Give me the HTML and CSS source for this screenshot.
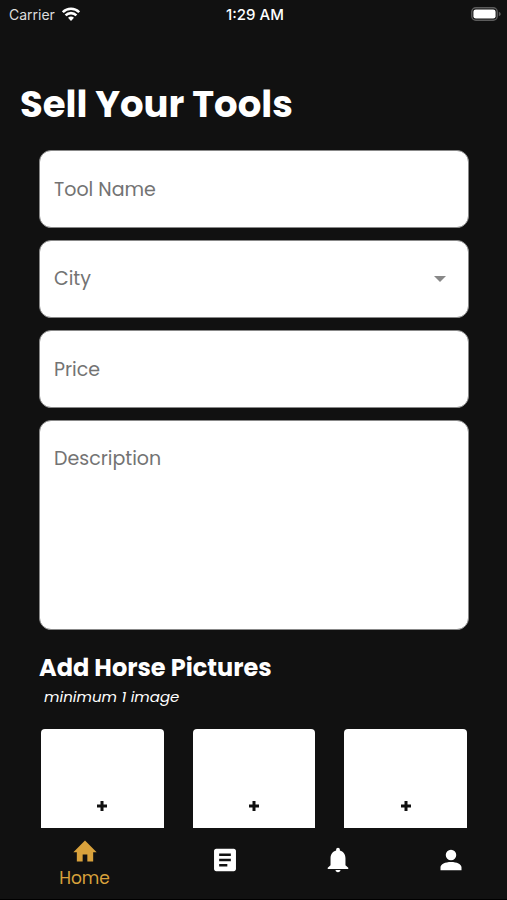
FILE: index.html
```html
<!DOCTYPE html>
<html lang="en">
<head>
  <meta charset="utf-8">
  <meta name="viewport" content="width=device-width, initial-scale=1">
  <title>Sell Your Tools</title>
  <link rel="stylesheet" href="styles.css">
</head>
<body>
  <div class="app">
    <header class="status">
      <div class="carrier">
        <span>Carrier</span>
        <svg class="wifi" viewBox="0 0 18 14" aria-hidden="true">
          <g fill="none" stroke="currentColor" stroke-width="2.6">
            <path d="M.8 5.2a11.6 11.6 0 0 1 16.4 0"/>
            <path d="M3.600 8.400a7.600 7.600 0 0 1 10.800 0"/>
          </g>
          <path d="M9 14l3-3.200a4.400 4.400 0 0 0-6 0z" fill="currentColor"/>
        </svg>
      </div>
      <time class="clock">1:29 AM</time>
      <svg class="battery" viewBox="0 0 30 14" aria-hidden="true">
        <rect x=".8" y=".8" width="25.4" height="12.4" rx="4" fill="none" stroke="#5c5c5c" stroke-width="1.4"/>
        <rect x="2.4" y="2.4" width="22.2" height="9.2" rx="2.4" fill="#fff"/>
        <path d="M27.8 4.7c2.6 1 2.6 3.6 0 4.6z" fill="#5c5c5c"/>
      </svg>
    </header>

    <main class="content">
      <h1 class="title">Sell Your Tools</h1>
      <form class="form">
        <input class="field" type="text" placeholder="Tool Name" aria-label="Tool Name">
        <div class="picker">
          <select class="field" aria-label="City">
            <option>City</option>
          </select>
          <svg class="caret" viewBox="0 0 12 6" aria-hidden="true"><path d="M0 0h12L6 6z" fill="currentColor"/></svg>
        </div>
        <input class="field" type="text" placeholder="Price" aria-label="Price">
        <textarea class="field field-tall" placeholder="Description" aria-label="Description"></textarea>

        <section class="pictures">
          <h2 class="subtitle">Add Horse Pictures</h2>
          <p class="hint">minimum 1 image</p>
          <div class="tiles">
            <button class="tile" type="button" aria-label="Add picture 1"><svg class="plus" viewBox="0 0 10 10"><path d="M5 0v10M0 5h10"/></svg></button>
            <button class="tile" type="button" aria-label="Add picture 2"><svg class="plus" viewBox="0 0 10 10"><path d="M5 0v10M0 5h10"/></svg></button>
            <button class="tile" type="button" aria-label="Add picture 3"><svg class="plus" viewBox="0 0 10 10"><path d="M5 0v10M0 5h10"/></svg></button>
          </div>
        </section>
      </form>
    </main>

    <nav class="tabs">
      <a class="tab active" href="#home" aria-current="page">
        <svg class="icon" viewBox="0 0 24 24" aria-hidden="true"><path d="M10 21v-6h4v6h5v-8h3L12 3 2 13h3v8z"/></svg>
        <span>Home</span>
      </a>
      <a class="tab" href="#listings" aria-label="Listings">
        <svg class="icon" viewBox="0 0 24 24" aria-hidden="true"><path d="M19.500 2.400h-15c-1.100 0-1.900.8-1.900 1.900v15.400c0 1 .8 1.900 1.900 1.900h15c1.100 0 1.900-.9 1.900-1.900V4.300c0-1.100-.8-1.900-1.900-1.900zM14 17.500H7v-2h7v2zm3-4.500H7v-2h10v2zm0-4.500H7v-2h10v2z"/></svg>
      </a>
      <a class="tab" href="#notifications" aria-label="Notifications">
        <svg class="icon" viewBox="0 0 24 24" aria-hidden="true"><path d="M12 22.500c1.200 0 2.100-.8 2.100-1.900H9.900c0 1.100.9 1.900 2.100 1.900zM18.400 16.500V10.500c0-3.200-1.900-5.800-4.800-6.600v-.8a1.600 1.600 0 0 0-3.200 0v.8c-2.900.8-4.800 3.400-4.800 6.600v6L3.200 18.700v1h17.600v-1z"/></svg>
      </a>
      <a class="tab" href="#profile" aria-label="Profile">
        <svg class="icon" viewBox="0 0 24 24" aria-hidden="true"><path d="M12 3.200a4.500 4.500 0 1 1 0 9 4.500 4.500 0 0 1 0-9zM12 13.800c5 0 9 1.900 9 4.500v2.400H3v-2.400c0-2.600 4-4.500 9-4.500z"/></svg>
      </a>
    </nav>
  </div>
</body>
</html>
```
FILE: styles.css
```css
* {
  box-sizing: border-box;
}

body {
  margin: 0;
  background: #111;
  color: #fff;
  font-family: Poppins, Inter, "Liberation Sans", sans-serif;
}

h1, h2, p {
  margin: 0;
}

.app {
  display: flex;
  flex-direction: column;
  height: 100vh;
  border-bottom: 1px solid #000;
}

.status {
  display: grid;
  grid-template-columns: 1fr auto 1fr;
  align-items: center;
  height: 28px;
  padding: 0 6px 0 9px;
  font-family: Inter, sans-serif;
  font-size: 14px;
}

.carrier {
  display: flex;
  align-items: center;
  gap: 7px;
  color: #ddd;
}

.wifi {
  width: 18px;
  height: 14px;
  color: #fff;
}

.clock {
  font-size: 15px;
  font-weight: 500;
}

.battery {
  justify-self: end;
  width: 30px;
  height: 14px;
}

.content {
  flex: 1;
  min-height: 0;
  overflow-y: auto;
  scrollbar-width: none;
  padding-top: 48px;
}

.title {
  padding-left: 20px;
  font-size: 37px;
  line-height: 56px;
  font-weight: 700;
}

.form {
  display: flex;
  flex-direction: column;
  gap: 12px;
  padding: 18px 38px 24px 39px;
}

.field {
  display: block;
  width: 100%;
  height: 78px;
  padding: 0 14px;
  border: 1px solid #888;
  border-radius: 12px;
  background: #fff;
  color: #737373;
  font-family: inherit;
  font-size: 19px;
  line-height: 28px;
  appearance: none;
}

.field::placeholder {
  color: #737373;
  opacity: 1;
}

.field-tall {
  height: 210px;
  padding: 24px 14px;
  resize: none;
}

.picker {
  position: relative;
}

.caret {
  position: absolute;
  top: 36px;
  right: 23px;
  width: 12px;
  height: 6px;
  color: #888;
  pointer-events: none;
}

.pictures {
  padding-top: 8px;
}

.subtitle {
  font-size: 24px;
  line-height: 36px;
  font-weight: 700;
}

.hint {
  padding-left: 5px;
  font-size: 15px;
  line-height: 22px;
  font-style: italic;
}

.tiles {
  display: grid;
  grid-template-columns: repeat(3, 1fr);
  gap: 29px;
  padding: 21px 2px 0;
}

.tile {
  display: flex;
  align-items: center;
  justify-content: center;
  height: 154px;
  padding: 0;
  border: 0;
  border-radius: 4px;
  background: #fff;
  color: #111;
}

.plus {
  width: 10px;
  height: 10px;
  fill: none;
  stroke: currentColor;
  stroke-width: 3;
}

.tabs {
  display: grid;
  grid-template-columns: 3fr 2fr 2fr 2fr;
  height: 71px;
}

.tab {
  display: flex;
  flex-direction: column;
  align-items: center;
  justify-content: center;
  padding-bottom: 8px;
  color: #fff;
  font-size: 17px;
  line-height: 26px;
  text-decoration: none;
}

.active {
  padding-bottom: 0;
  color: #d9a23c;
}

.icon {
  width: 28px;
  height: 28px;
  fill: currentColor;
}
```
